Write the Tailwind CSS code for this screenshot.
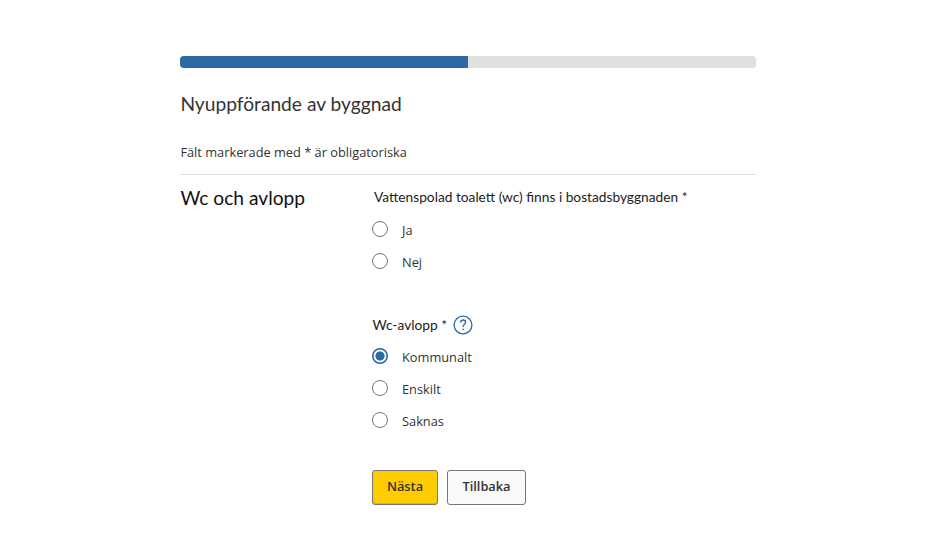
<!DOCTYPE html>
<html lang="sv">
<head>
    <meta charset="UTF-8">
    <meta name="viewport" content="width=device-width, initial-scale=1.0">
    <title>Nyuppförande av byggnad</title>
    <script src="https://cdn.jsdelivr.net/npm/@tailwindcss/browser@4"></script>
</head>
<body class="bg-white font-['Open_Sans',sans-serif] text-[12.8px] text-[#333]">
    <main class="ml-[180px] w-[576px] pt-14">
        <!-- Progress -->
        <div class="h-3 overflow-hidden rounded bg-[#e0e0e0]">
            <div class="h-full bg-[#2d69a3]" style="width: 50%"></div>
        </div>

        <h1 class="mt-[22px] pl-[0.4px] font-['Lato',sans-serif] text-[19.2px] leading-7">Nyuppförande av byggnad</h1>
        <p class="mt-6 h-[33px] border-b border-[#e0e0e0] pl-[0.4px] leading-5">Fält markerade med * är obligatoriska</p>

        <form class="flex pt-2">
            <h2 class="w-48 pt-px pl-[0.4px] font-['Lato',sans-serif] text-[19.2px] leading-7 text-[#111]">Wc och avlopp</h2>
            <div class="flex-1">
                <fieldset class="h-32">
                    <legend class="pt-1 pl-0.5 font-['Lato',sans-serif] text-[13.73px] leading-5 text-[#222]">Vattenspolad toalett (wc) finns i bostadsbyggnaden *</legend>
                    <label class="mt-[11px] flex h-[22px] items-center gap-[14px]">
                        <input type="radio" name="wc" class="size-4 appearance-none rounded-full border border-[#767676]">
                        <span class="pt-1">Ja</span>
                    </label>
                    <label class="mt-[10px] flex h-[22px] items-center gap-[14px]">
                        <input type="radio" name="wc" class="size-4 appearance-none rounded-full border border-[#767676]">
                        <span class="pt-1">Nej</span>
                    </label>
                </fieldset>

                <fieldset>
                    <legend class="flex h-7 items-center gap-[6.5px] font-['Lato',sans-serif] text-[13.73px] leading-5 text-[#222]">
                        <span class="pl-[0.5px]">Wc-avlopp *</span>
                        <svg class="size-5" viewBox="0 0 20 20" fill="none" stroke="#2d69a3" stroke-linecap="round" stroke-linejoin="round">
                            <circle cx="10" cy="10" r="8.9" stroke-width="1.3" />
                            <path d="M7.6 7.2c.2-1.4 1.1-2.2 2.5-2.2s2.5.8 2.5 2.2c0 2-2.5 2.1-2.5 4.4" stroke-width="1.3" />
                            <path d="M10 14.4v.2" stroke-width="1.6" />
                        </svg>
                    </legend>
                    <label class="mt-[6px] flex h-[22px] items-center gap-[14px]">
                        <input type="radio" name="avlopp" checked class="size-4 appearance-none rounded-full bg-[radial-gradient(circle,#2d69a3_4.2px,#fff_5px,#fff_6px,#2d69a3_6.7px)]">
                        <span class="pt-1">Kommunalt</span>
                    </label>
                    <label class="mt-[10px] flex h-[22px] items-center gap-[14px]">
                        <input type="radio" name="avlopp" class="size-4 appearance-none rounded-full border border-[#767676]">
                        <span class="pt-1">Enskilt</span>
                    </label>
                    <label class="mt-[10px] flex h-[22px] items-center gap-[14px]">
                        <input type="radio" name="avlopp" class="size-4 appearance-none rounded-full border border-[#767676]">
                        <span class="pt-1">Saknas</span>
                    </label>
                </fieldset>

                <div class="mt-[39px] flex gap-[9px] font-semibold">
                    <button type="button" class="h-[35px] w-[66px] rounded-[3px] border border-[#767676] bg-[#fc0] pb-0.5 shadow-[inset_0_-1px_0_#e6b000]">Nästa</button>
                    <button type="button" class="h-[35px] w-[79px] rounded-[3px] border border-[#767676] bg-[#fafafa] pb-0.5">Tillbaka</button>
                </div>
            </div>
        </form>
    </main>
</body>
</html>
